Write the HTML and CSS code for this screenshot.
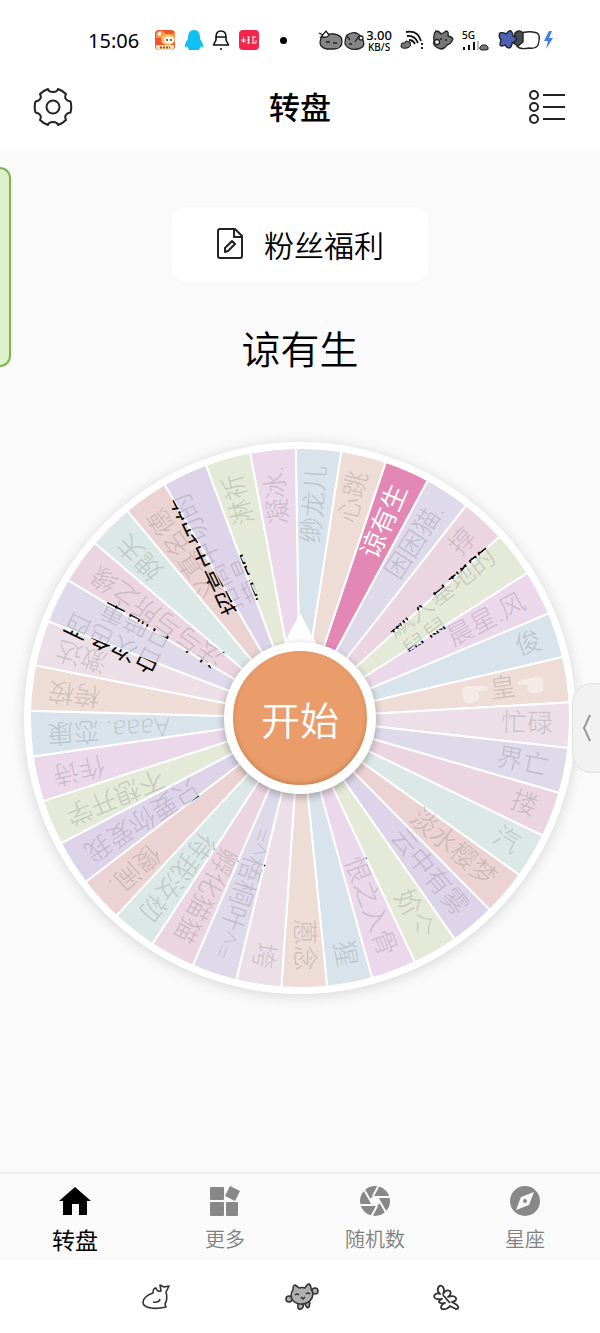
FILE: index.html
```html
<!DOCTYPE html>
<html lang="zh-CN">
<head>
    <meta charset="UTF-8">
    <meta name="viewport" content="width=device-width, initial-scale=1.0">
    <title>转盘</title>
    <link rel="stylesheet" href="styles.css">
</head>
<body>

    <div class="status-bar">
        <span class="time">15:06</span>
        <div class="status-left">
            <svg width="22" height="22" viewBox="0 0 22 22">
                <rect x="1" y="1" width="20" height="20" rx="4" fill="#f0532d"/>
                <path d="M2 4q5-5 9 0t10-1v6H2z" fill="#f7934a"/>
                <circle cx="5.500" cy="5" r="2" fill="#fff4d8"/>
                <ellipse cx="14" cy="10.500" rx="7" ry="5.500" fill="#ffc15e"/>
                <ellipse cx="15" cy="11" rx="5" ry="3.500" fill="#fff"/>
                <circle cx="13" cy="11" r="1" fill="#5b2a18"/>
                <circle cx="17" cy="11" r="1" fill="#5b2a18"/>
                <path d="M2 16h18v2q0 3-3 3H5q-3 0-3-3z" fill="#f7dfb4"/>
                <path d="M6 18.500h10" stroke="#a8521c" stroke-width="2" stroke-dasharray="2 1"/>
            </svg>
            <svg width="20" height="22" viewBox="0 0 20 22">
                <path d="M10 1c4 0 6 3 6 8 0 2 3 4 3 8 0 2-1 2-2 0-.5 2-1 2-2 3 1 1 0 1-1 1H6c-1 0-2 0-1-1-1-1-1.500-1-2-3-1 2-2 2-2 0 0-4 3-6 3-8 0-5 2-8 6-8z" fill="#12bff2"/>
            </svg>
            <svg width="18" height="22" viewBox="0 0 18 22" fill="none" stroke="#111" stroke-width="1.6">
                <path d="M9 2c4 0 5 3 5 6v3l2.500 5H1.500L4 11V8c0-3 1-6 5-6z" stroke-linejoin="round"/>
                <path d="M4 8h10M8 20h2"/>
            </svg>
            <svg width="22" height="22" viewBox="0 0 22 22">
                <rect x="1" y="1" width="20" height="20" rx="4" fill="#f5244b"/>
                <path d="M5.500 8v6M4 10v3M7 10v3M9 8h3M9 11h3M9 14h3M10.500 8v6M14 8h4M14 14h4M15 8v6M18 11v3" stroke="#fff" stroke-width="1"/>
            </svg>
            <span class="dot"></span>
        </div>
        <div class="status-right">
            <svg width="48" height="22" viewBox="0 0 48 22" stroke="#222" stroke-width="1.300">
                <path d="M3 9Q8 4 16 5q8 1 8 7 0 8-8 8H9q-7-1-7-7z" fill="#858585"/>
                <path d="M1 4l4 2M3 8l5-6 3 4q-2 3-6 2z" fill="#fff"/>
                <path d="M8 13h4M15 14h4" fill="none"/>
                <path d="M29 6q9-6 15 3 5 9-4 11-9 2-13-5 0-6 2-9z" fill="#858585"/>
                <path d="M32 11l-3-4M37 13l4-6M31 15h3" fill="none"/>
                <circle cx="43" cy="9" r="2" fill="#fff"/>
            </svg>
            <div class="speed"><b>3.00</b><span>KB/S</span></div>
            <svg width="24" height="22" viewBox="0 0 24 22" fill="none" stroke="#111" stroke-width="1.800">
                <path d="M6 3q12-2 15 9M7 7q8-1 11 7M9 11q4 0 6 4"/>
                <path d="M2 14l3 0 1-2 4 1q2 5-3 6-6 1-6-2z" fill="#777" stroke-width="1"/>
                <path d="M22 14v2M22 18v2"/>
            </svg>
            <svg width="22" height="22" viewBox="0 0 22 22" fill="#777" stroke="#222" stroke-width="1.300" stroke-linejoin="round">
                <path d="M4 2q3 0 5 3 3-1 5-3 3 0 2 5 4 1 5 3-2 5-6 6-3 4-6 4-4-1-6-3-2-2-1-5-1-6 2-10z"/>
                <circle cx="5" cy="13" r="2.500" fill="#fff"/>
                <path d="M8 10h2M13 11h2"/>
            </svg>
            <div class="signal">
                <span>5G</span>
                <svg width="28" height="10" viewBox="0 0 28 10">
                    <path d="M2 9V6M7 9V4M12 9V1" stroke="#111" stroke-width="2"/>
                    <path d="M16 9V0" stroke="#bbb" stroke-width="2"/>
                    <path d="M18 6l2-2 4 0 2 2q1 3-2 3h-5q-2-1-1-3z" fill="#777" stroke="#222"/>
                </svg>
            </div>
            <svg width="58" height="22" viewBox="0 0 58 22" stroke="#222" stroke-width="1.400" stroke-linejoin="round">
                <path d="M21 5q9-4 18-1 4 2 1 12-2 4-9 3-9 2-12-2z" fill="#fff"/>
                <path d="M17 4q4-4 8 0l0 9-5 4-5-3z" fill="#4a4a55"/>
                <path d="M2 4q3-1 6 1 3-4 5-3 2 2 2 5 4 1 3 4-1 2-4 3 0 4-3 5-2 0-4-3-3 2-5 0 0-3 1-5-3-4-1-7z" fill="#5060b4"/>
                <path d="M51 2l-5 10h4l-2 8 7-11h-4l3-7z" fill="#3f7af0" stroke="none"/>
            </svg>
        </div>
    </div>

    <header class="header">
        <button class="icon-btn" aria-label="设置">
            <svg width="40" height="40" viewBox="-20 -20 40 40" fill="none" stroke="#222" stroke-width="2" stroke-linejoin="round">
                <path d="M-5 -18C-4 -14 4 -14 5 -18C8 -17 10 -16 13 -13C11 -9 13 -6 17.500 -5.500C18.500 -2 18.500 2 17.500 5.500C13 6 11 9 13 13C10 16 8 17 5 18C4 14 -4 14 -5 18C-8 17 -10 16 -13 13C-11 9 -13 6 -17.500 5.500C-18.500 2 -18.500 -2 -17.500 -5.500C-13 -6 -11 -9 -13 -13C-10 -16 -8 -17 -5 -18Z"/>
                <circle r="6.500"/>
            </svg>
        </button>
        <h1>转盘</h1>
        <button class="icon-btn" aria-label="列表">
            <svg width="40" height="40" viewBox="0 0 40 40" fill="none" stroke="#222" stroke-width="2">
                <circle cx="7" cy="8" r="4"/>
                <circle cx="7" cy="20" r="4"/>
                <circle cx="7" cy="32" r="4"/>
                <path d="M16 8h22M16 20h22M16 32h22"/>
            </svg>
        </button>
    </header>

    <main>
        <div class="side-panel"></div>

        <button class="title-card">
            <svg width="28" height="32" viewBox="0 0 28 32" fill="none" stroke="#222" stroke-width="2" stroke-linejoin="round">
                <path d="M4 1h15l7 7v20q0 2-2 2H4q-2 0-2-2V3q0-2 2-2z"/>
                <path d="M18 1v8h8"/>
                <path d="M9 24v-4l7-7 3 3-7 7z"/>
            </svg>
            <span>粉丝福利</span>
        </button>

        <p class="result">谅有生</p>

        <div class="wheel">
            <svg id="wheel" viewBox="-276 -276 552 552"></svg>
            <svg class="pointer" viewBox="0 0 38 36"><path d="M19 0L38 36H0z" fill="#fff"/></svg>
            <button class="start">开始</button>
        </div>

        <button class="drawer" aria-label="展开">
            <svg width="10" height="28" viewBox="0 0 10 28" fill="none" stroke="#999" stroke-width="2"><path d="M8 1L2 14l6 13"/></svg>
        </button>
    </main>

    <nav class="tabs">
        <a href="#" class="active">
            <svg width="34" height="32" viewBox="0 0 34 32"><path d="M17 2l16 14h-4v14h-8V19h-7v11H5V16H1z" fill="#000"/></svg>
            转盘
        </a>
        <a href="#">
            <svg width="34" height="32" viewBox="0 0 34 32" fill="#888">
                <rect x="2" y="2" width="14" height="13" rx="1"/>
                <rect x="2" y="17" width="14" height="14" rx="1"/>
                <rect x="18" y="17" width="12" height="14" rx="1"/>
                <path d="M22 1l10 5-5 10-10-5z"/>
            </svg>
            更多
        </a>
        <a href="#">
            <svg width="34" height="32" viewBox="-17 -16 34 32">
                <circle r="15" fill="#888"/>
                <path d="M3 -4H17M5 1L13 15M2 5L-5 18M-3 4H-17M-5 -1L-13 -15M-2 -5L5 -18" stroke="#fafafa" stroke-width="2"/>
                <path d="M3 -5L6 1L2 5L-3 5L-6 -1L-2 -5z" fill="#fafafa"/>
            </svg>
            随机数
        </a>
        <a href="#">
            <svg width="34" height="32" viewBox="-17 -16 34 32">
                <circle r="15" fill="#888"/>
                <path d="M9 -9L4 4L-9 9L-4 -4z" fill="#fafafa"/>
                <circle r="2" fill="#888"/>
            </svg>
            星座
        </a>
    </nav>

    <div class="system-nav">
        <button aria-label="返回">
            <svg width="32" height="28" viewBox="0 0 32 28" fill="#fff" stroke="#333" stroke-width="1.600" stroke-linejoin="round">
                <path d="M13 10q0-5 3-5 1 4 5 3l-1-6 4 2 5-1-3 6q2 7-1 12l1 3q-9 2-15 1-8-1-8-6 1-6 10-9z"/>
                <path d="M13 19q6 1 7-3" fill="none"/>
            </svg>
        </button>
        <button aria-label="主页">
            <svg width="34" height="28" viewBox="0 0 34 28" fill="#b0b0b0" stroke="#333" stroke-width="1.600" stroke-linejoin="round">
                <path d="M13 21q-1 6 3 5 3-1 2-5M20 21q2 5 4 3l1-5"/>
                <circle cx="4" cy="16" r="3"/>
                <circle cx="30" cy="8" r="3"/>
                <path d="M8 7q0-5 2-5 2 1 4 3 3-1 6 0 2-4 4-4 2 1 2 5 3 4 1 9-4 7-12 6-8-1-9-8 0-4 2-6z"/>
                <path d="M10 12q2-2 4 0M21 11q2-2 4 0M16 14l2 2 2-2" fill="none"/>
            </svg>
        </button>
        <button aria-label="最近任务">
            <svg width="28" height="28" viewBox="0 0 28 28" fill="#fff" stroke="#333" stroke-width="1.800" stroke-linejoin="round">
                <path d="M8 11Q5 8 6 5q2-4 5-1 2 3 0 7 3-5 7-3 2 3-2 6 6-2 8 1 1 3-4 4l5 3q3 4-1 4l-6-3q-3 4-8 3-3-3 3-6-5 1-6-1 0-2 3-3-8 1-8-3 2-4 6-2z"/>
                <path d="M11 12l7 8" fill="none"/>
            </svg>
        </button>
    </div>

    <script src="wheel.js"></script>
</body>
</html>
```

FILE: styles.css
```css
* {
    box-sizing: border-box;
}
body {
    margin: 0;
    min-height: 100vh;
    display: flex;
    flex-direction: column;
    font-family: "Noto Sans", "Noto Sans CJK SC", sans-serif;
    color: #000;
    background-color: #fff;
}
button {
    border: none;
    padding: 0;
    background: none;
    font-family: inherit;
    color: inherit;
    cursor: pointer;
}
svg {
    display: block;
}

/* Status bar */
.status-bar {
    display: flex;
    align-items: center;
    height: 68px;
    padding: 12px 44px 0 88px;
}
.time {
    font-size: 20px;
}
.status-left,
.status-right {
    display: flex;
    align-items: center;
}
.status-left {
    gap: 8px;
    margin-left: 15px;
}
.status-right {
    gap: 8px;
    margin-left: auto;
}
.dot {
    width: 7px;
    height: 7px;
    margin-left: 12px;
    border-radius: 50%;
    background-color: #000;
}
.speed {
    display: flex;
    flex-direction: column;
    align-items: center;
    margin-left: -8px;
    font-size: 10px;
    line-height: 10px;
    font-weight: 500;
}
.speed b {
    font-size: 13px;
    line-height: 14px;
    font-weight: 500;
}
.signal span {
    display: block;
    font-size: 10px;
    line-height: 11px;
    font-weight: 500;
}

/* Header */
.header {
    display: flex;
    align-items: center;
    justify-content: space-between;
    height: 81px;
    padding: 0 33px 4px;
}
.header h1 {
    margin: 0;
    font-size: 31px;
    line-height: 40px;
    font-weight: 500;
}

main {
    flex: 1;
    position: relative;
    display: flex;
    flex-direction: column;
    align-items: center;
    padding: 58px 0;
    background-color: #fafafa;
}
.title-card {
    display: flex;
    align-items: center;
    gap: 20px;
    height: 75px;
    padding: 0 44px 2px;
    border-radius: 16px;
    background-color: #fff;
    font-size: 30px;
    font-weight: 350;
}
.result {
    margin: 43px 0 69px;
    font-size: 39px;
    line-height: 48px;
    font-weight: 350;
}
.side-panel {
    position: absolute;
    left: 0;
    top: 18px;
    width: 11px;
    height: 200px;
    border: 2px solid #78b84c;
    border-left: none;
    border-radius: 0 12px 12px 0;
    background-color: #dff0cc;
}
.drawer {
    position: absolute;
    right: 0;
    top: 534px;
    width: 28px;
    height: 90px;
    padding-left: 9px;
    border: 1px solid #e2e2e2;
    border-right: none;
    border-radius: 20px 0 0 20px;
    background-color: #f1f1f1;
}

/* Wheel */
.wheel {
    position: relative;
    width: 92%;
    aspect-ratio: 1;
    border-radius: 50%;
    background-color: #fff;
    box-shadow: 0 2px 14px rgba(0, 0, 0, 0.15);
}
.slice {
    stroke: #fff;
    stroke-width: 2;
}
.slice-text {
    font-size: 26px;
    font-weight: 350;
}
.label {
    fill: rgba(0, 0, 0, 0.13);
}
.label.win {
    fill: #fff;
}
.spill {
    fill: #000;
}
.pointer {
    position: absolute;
    left: 50%;
    top: 31%;
    width: 7%;
    transform: translateX(-50%);
}
.start {
    position: absolute;
    left: 50%;
    top: 50%;
    width: 152px;
    height: 152px;
    transform: translate(-50%, -50%);
    border: 9px solid #fff;
    border-radius: 50%;
    background-color: #ea9d6b;
    box-shadow: 0 3px 8px rgba(0, 0, 0, 0.3), inset 0 -2px 4px rgba(120, 70, 30, 0.3);
    color: #fff;
    font-size: 39px;
    font-weight: 350;
}

/* Bottom tabs */
.tabs {
    display: flex;
    height: 88px;
    border-top: 2px solid #f0f0f0;
    background-color: #fafafa;
}
.tabs a {
    flex: 1;
    display: flex;
    flex-direction: column;
    align-items: center;
    gap: 4px;
    padding-top: 11px;
    color: #808080;
    font-size: 20px;
    line-height: 38px;
    font-weight: 350;
    text-decoration: none;
}
.tabs svg {
    flex-shrink: 0;
}
.tabs a.active {
    color: #000;
    font-size: 23px;
    font-weight: 400;
}
.system-nav {
    display: flex;
    justify-content: center;
    align-items: center;
    gap: 113px;
    height: 73px;
}
```

FILE: wheel.js
```js
const BLUE = "#d9e3ec", PEACH = "#eedcd7", PALE = "#ecdfe7", LAVENDER = "#dedaea", PINK = "#ead5e1";
const MINT = "#dce8e5", RED = "#ebd3d3", PURPLE = "#ded4ea", GREEN = "#e4e9d8", VIOLET = "#ebd8eb";

const slices = [
    [BLUE, "缈龙儿"],
    [PEACH, "心跳"],
    ["#e388b5", "谅有生"],
    [LAVENDER, "困困猫."],
    [PINK, "㨃"],
    [GREEN, "飙人基地的", "鼠鼠"],
    [VIOLET, "晨星.风"],
    [BLUE, "俊"],
    [PEACH, "皇"],
    [PALE, "忙碌"],
    [LAVENDER, "界亡"],
    [PINK, "搂"],
    [MINT, "汽"],
    [RED, "淡水樱梦"],
    [PURPLE, "云中有雾"],
    [GREEN, "妎亽"],
    [VIOLET, "恨之入骨"],
    [BLUE, "猩"],
    [PEACH, "蒽念"],
    [PALE, "垮"],
    [LAVENDER, "=^梧桐叶^="],
    [PINK, "孵化猫猫"],
    [MINT, "待我汝初"],
    [RED, "傻闹."],
    [PURPLE, "只要你爱我"],
    [GREEN, "不想开学"],
    [VIOLET, "作诗"],
    [BLUE, "Aaaa. 恋康"],
    [PEACH, "桍桉"],
    [PALE, "激达"],
    [LAVENDER, "白次色西", "日暗重"],
    [PINK, "法与与所之缘"],
    [MINT, "媿夫"],
    [RED, "义真名德"],
    [PURPLE, "招高中切的", "营晶"],
    [GREEN, "淋祈"],
    [VIOLET, "凝冰."]
];

const WINNER = 2;
const WIDE_SPILL = [30, 34];

const R = 270;
const step = 360 / slices.length;
const half = step / 2 * Math.PI / 180;
const x = R * Math.cos(half);
const y = R * Math.sin(half);
const wedge = `M0 0L${x} ${-y}A${R} ${R} 0 0 1 ${x} ${y}Z`;

// pointing hands either side of the single character
const hand = '<path d="M-13 -4Q-9 -9 -3 -7L12 -5Q15 -2 11 -1L2 0Q6 5 1 8Q-6 12 -12 7Z" fill="#f5ebe6"/>';

let fills = "";
let labels = "";

slices.forEach(([color, ...lines], i) => {
    const angle = -0.9 + step * (i + 0.5) - 90;
    fills += `<path class="slice" transform="rotate(${angle})" d="${wedge}" fill="${color}"/>`;

    const won = i === WINNER;
    const end = lines[0] === "皇" ? 218 : 253;
    const start = end - 26 * lines[0].length;
    const text = lines.length > 1
        ? `<tspan x="${start}" y="-5">${lines[0]}</tspan><tspan x="${start}" y="23">${lines[1]}</tspan>`
        : `<tspan x="${end}" y="8" text-anchor="end">${lines[0]}</tspan>`;
    const clip = WIDE_SPILL.includes(i) ? "wide" : "edge";

    labels += `<g transform="rotate(${angle})">
        <g class="label ${won ? "win" : ""}" ${won ? "" : 'clip-path="url(#all)"'}><text class="slice-text" id="t${i}">${text}</text></g>
        ${won ? "" : `<g clip-path="url(#${clip})"><use class="spill" href="#t${i}"/></g>`}
        ${lines[0] === "皇" ? `<g transform="translate(177 0)">${hand}</g><g transform="translate(233 0) scale(-1 1)">${hand}</g>` : ""}
    </g>`;
});

// a label that is too tall for its slice turns black past the slice's edge
document.getElementById("wheel").innerHTML = `
    <defs>
        <clipPath id="all"><path d="${wedge}"/></clipPath>
        <clipPath id="edge"><path clip-rule="evenodd" d="M0 -3L${x} ${-y - 3}V${y + 3}L0 3Z${wedge}"/></clipPath>
        <clipPath id="wide"><path clip-rule="evenodd" d="M0 -80H${x}V${y + 3}L0 3Z${wedge}"/></clipPath>
    </defs>
    ${fills}${labels}`;
```
